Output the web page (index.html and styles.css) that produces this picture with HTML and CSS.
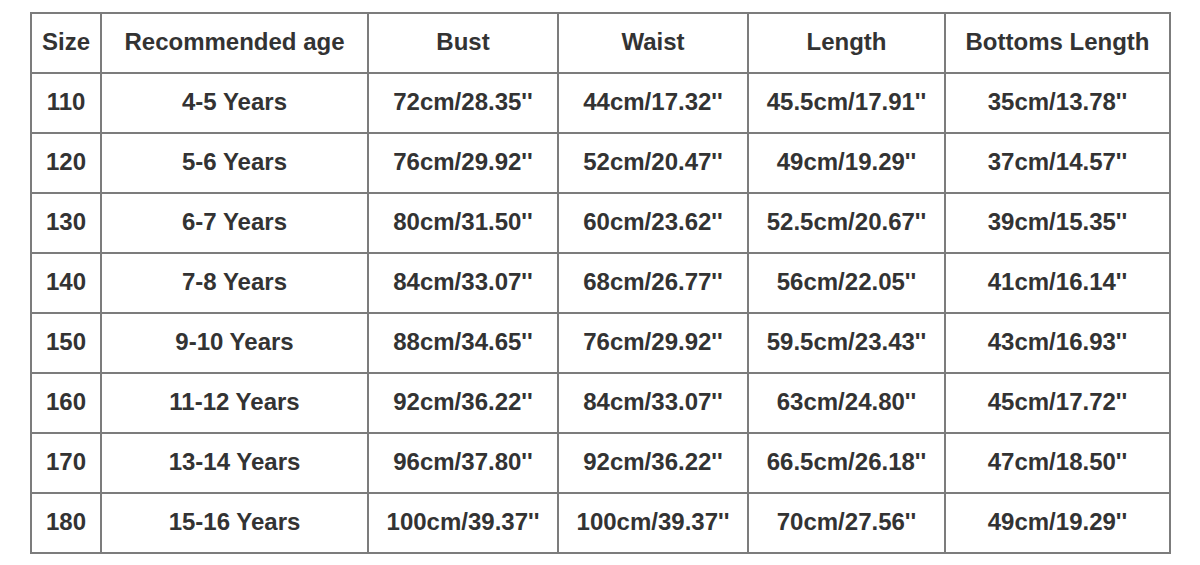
FILE: index.html
```html
<!DOCTYPE html>
<html>
<head>
<meta charset="utf-8">
<link rel="stylesheet" href="styles.css">
</head>
<body>
<table class="size-table">
  <colgroup>
    <col class="c-size"><col class="c-age"><col class="c-bust"><col class="c-waist"><col class="c-length"><col class="c-bottoms">
  </colgroup>
  <thead>
    <tr><th>Size</th><th>Recommended age</th><th>Bust</th><th>Waist</th><th>Length</th><th>Bottoms Length</th></tr>
  </thead>
  <tbody>
    <tr><td>110</td><td>4-5 Years</td><td>72cm/28.35''</td><td>44cm/17.32''</td><td>45.5cm/17.91''</td><td>35cm/13.78''</td></tr>
    <tr><td>120</td><td>5-6 Years</td><td>76cm/29.92''</td><td>52cm/20.47''</td><td>49cm/19.29''</td><td>37cm/14.57''</td></tr>
    <tr><td>130</td><td>6-7 Years</td><td>80cm/31.50''</td><td>60cm/23.62''</td><td>52.5cm/20.67''</td><td>39cm/15.35''</td></tr>
    <tr><td>140</td><td>7-8 Years</td><td>84cm/33.07''</td><td>68cm/26.77''</td><td>56cm/22.05''</td><td>41cm/16.14''</td></tr>
    <tr><td>150</td><td>9-10 Years</td><td>88cm/34.65''</td><td>76cm/29.92''</td><td>59.5cm/23.43''</td><td>43cm/16.93''</td></tr>
    <tr><td>160</td><td>11-12 Years</td><td>92cm/36.22''</td><td>84cm/33.07''</td><td>63cm/24.80''</td><td>45cm/17.72''</td></tr>
    <tr><td>170</td><td>13-14 Years</td><td>96cm/37.80''</td><td>92cm/36.22''</td><td>66.5cm/26.18''</td><td>47cm/18.50''</td></tr>
    <tr><td>180</td><td>15-16 Years</td><td>100cm/39.37''</td><td>100cm/39.37''</td><td>70cm/27.56''</td><td>49cm/19.29''</td></tr>
  </tbody>
</table>
</body>
</html>
```

FILE: styles.css
```css
html, body {
  margin: 0;
  padding: 0;
  background: #ffffff;
}
body {
  padding: 12px 0 0 30px;
  font-family: "Liberation Sans", Arial, sans-serif;
}
.size-table {
  border-collapse: collapse;
  table-layout: fixed;
  width: 1139px;
  color: #333333;
  font-size: 24px;
  font-weight: bold;
}
.c-size { width: 70px; }
.c-age { width: 267px; }
.c-bust { width: 190px; }
.c-waist { width: 190px; }
.c-length { width: 197px; }
.c-bottoms { width: 225px; }
.size-table th,
.size-table td {
  border: 2px solid #7c7c7c;
  height: 56px;
  padding: 0 0 2px 0;
  text-align: center;
  vertical-align: middle;
  white-space: nowrap;
}
```
